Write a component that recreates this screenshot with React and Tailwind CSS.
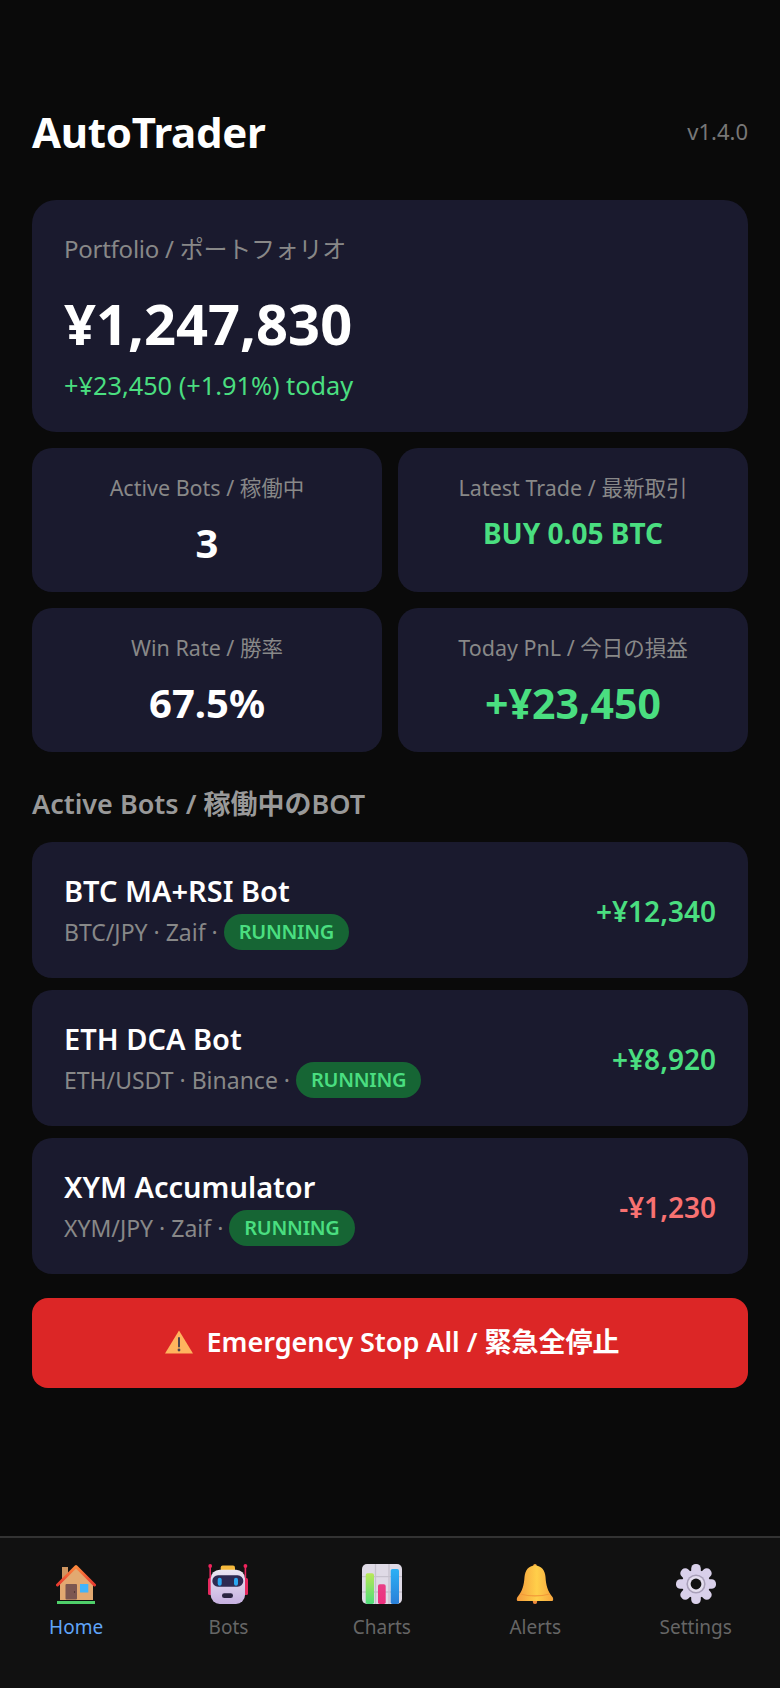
import React from 'react'

const font = { fontFamily: '"Noto Sans", "Noto Sans CJK JP", sans-serif' }

function HomeIcon() {
  return (
    <svg viewBox="0 0 40 40" className="w-10 h-10">
      <defs>
        <linearGradient id="roof" x1="0" y1="0" x2="0" y2="1">
          <stop offset="0" stopColor="#ff8a3d" />
          <stop offset="1" stopColor="#e8392f" />
        </linearGradient>
      </defs>
      <rect x="6" y="3" width="6" height="12" fill="#cf9560" />
      <path d="M20 3 L4 19 V36 H37 V19 Z" fill="#e2a971" />
      <rect x="9.5" y="20" width="11.5" height="15.5" rx="1" fill="#7c5751" />
      <circle cx="18.5" cy="28" r="0.7" fill="#3f2a2a" />
      <rect x="24" y="20" width="8.3" height="8.5" fill="#3fb4fb" />
      <path d="M1.5 21 L20 2.5 L38.5 21" fill="none" stroke="url(#roof)" strokeWidth="3" strokeLinejoin="round" strokeLinecap="round" />
      <rect x="1" y="37" width="38" height="3" fill="#4fd06a" />
    </svg>
  )
}

function BotIcon() {
  return (
    <svg viewBox="0 0 40 40" className="w-10 h-10">
      <defs>
        <linearGradient id="head" x1="0" y1="0" x2="0" y2="1">
          <stop offset="0" stopColor="#ece7f2" />
          <stop offset="1" stopColor="#c6b0e0" />
        </linearGradient>
      </defs>
      <rect x="1.4" y="2" width="1.6" height="15" fill="#e6295f" />
      <rect x="36.6" y="2" width="1.6" height="15" fill="#e6295f" />
      <circle cx="2.2" cy="2" r="1.9" fill="#f0245c" />
      <circle cx="37.4" cy="2" r="1.9" fill="#f0245c" />
      <rect x="0" y="14" width="4" height="17" rx="1.5" fill="#e6295f" />
      <rect x="36" y="14" width="4" height="17" rx="1.5" fill="#e6295f" />
      <rect x="12.7" y="1.5" width="14.3" height="6" rx="2" fill="#f6b93b" />
      <rect x="2.7" y="5.7" width="34.3" height="34.3" rx="9" fill="url(#head)" />
      <rect x="4.3" y="11.3" width="31" height="11.4" rx="5.7" fill="#2e2a52" />
      <rect x="9.7" y="13.7" width="4" height="8" rx="2" fill="#2aa7f0" />
      <rect x="26" y="13.7" width="4" height="8" rx="2" fill="#2aa7f0" />
      <rect x="14" y="29.3" width="11" height="4.7" rx="2.3" fill="#2a2440" />
    </svg>
  )
}

function ChartIcon() {
  return (
    <svg viewBox="0 0 40 40" className="w-10 h-10">
      <defs>
        <linearGradient id="barG" x1="0" y1="0" x2="0" y2="1">
          <stop offset="0" stopColor="#b9e858" />
          <stop offset="1" stopColor="#4fdd7a" />
        </linearGradient>
        <linearGradient id="barP" x1="0" y1="0" x2="0" y2="1">
          <stop offset="0" stopColor="#e83f86" />
          <stop offset="1" stopColor="#ee2f7e" />
        </linearGradient>
        <linearGradient id="barB" x1="0" y1="0" x2="0" y2="1">
          <stop offset="0" stopColor="#2bb0f5" />
          <stop offset="1" stopColor="#2a7fd8" />
        </linearGradient>
      </defs>
      <rect width="40" height="40" rx="5" fill="#dfdae6" />
      <path d="M13.5 0V40M27 0V40M0 12.7H40M0 28H40" stroke="#c6c1cd" strokeWidth="1.3" />
      <rect x="3.7" y="9.3" width="8.3" height="30.7" rx="1.8" fill="url(#barG)" />
      <rect x="16" y="20.3" width="7.7" height="19.7" rx="1.8" fill="url(#barP)" />
      <rect x="28.7" y="5" width="8.3" height="35" rx="1.8" fill="url(#barB)" />
    </svg>
  )
}

function BellIcon() {
  return (
    <svg viewBox="0 0 40 40" className="w-10 h-10">
      <defs>
        <linearGradient id="bell" x1="0" y1="0" x2="1" y2="0">
          <stop offset="0" stopColor="#f59b3c" />
          <stop offset="0.55" stopColor="#ffcf4a" />
          <stop offset="1" stopColor="#f6a53e" />
        </linearGradient>
      </defs>
      <circle cx="20" cy="37.8" r="2.2" fill="#f08a3c" />
      <circle cx="20" cy="1.8" r="1.8" fill="#f5a83e" />
      <path d="M20 1.5 C26.5 1.5 30 6.5 30.5 13 C31 21 32.5 27 37.5 33 C38.5 34.5 38.5 37 37 37 H3 C1.5 37 1.5 34.5 2.5 33 C7.5 27 9 21 9.5 13 C10 6.5 13.5 1.5 20 1.5Z" fill="url(#bell)" />
      <path d="M5.5 30 C14 32.5 26 32.5 34.5 30" fill="none" stroke="#f29a3a" strokeWidth="1.2" />
    </svg>
  )
}

function GearIcon() {
  const teeth = [0, 45, 90, 135, 180, 225, 270, 315]
  return (
    <svg viewBox="0 0 40 40" className="w-10 h-10">
      {teeth.map(a => (
        <rect key={a} x="15.2" y="0" width="9.6" height="12" rx="4.4" fill="#d9d0ea" transform={`rotate(${a} 20 20)`} />
      ))}
      <circle cx="20" cy="20" r="14" fill="#d9d0ea" />
      <circle cx="20" cy="20" r="9.6" fill="#a89fb8" />
      <circle cx="20" cy="20" r="8" fill="#e4deee" />
      <circle cx="20" cy="20" r="5.4" fill="#111111" />
    </svg>
  )
}

function WarnIcon() {
  return (
    <svg viewBox="0 0 28 24" className="w-7 h-6 shrink-0">
      <path d="M14 0.5 L28 23.5 H0 Z" fill="#ffb45e" />
      <rect x="13" y="7" width="2" height="10.5" rx="1" fill="#4b4650" />
      <circle cx="14" cy="20" r="1.4" fill="#4b4650" />
    </svg>
  )
}

function Stat({ label, value, valueClass }) {
  return (
    <div className="bg-[#1a1a2e] rounded-[20px] h-[144px] flex flex-col items-center pt-[25px]">
      <div className="text-[21.5px] leading-[30px] text-[#888888]">{label}</div>
      <div className={valueClass}>{value}</div>
    </div>
  )
}

function BotRow({ name, pair, pnl, pnlClass }) {
  return (
    <div className="bg-[#1a1a2e] rounded-[20px] h-[136px] flex items-center justify-between px-[32px] pt-[2px]">
      <div>
        <div className="text-[29px] leading-[38px] font-semibold text-white mb-[4px]">{name}</div>
        <div className="text-[23px] leading-[36px] text-[#888888] flex items-center gap-[6px]">
          <span>{pair} ·</span>
          <span className="bg-[#166534] text-[#4ade80] text-[20px] leading-[36px] font-semibold tracking-[-0.3px] rounded-[18px] px-[15px]">RUNNING</span>
        </div>
      </div>
      <div className={`text-[28px] font-semibold ${pnlClass}`}>{pnl}</div>
    </div>
  )
}

function NavItem({ icon, label, active }) {
  return (
    <div className="flex flex-col items-center min-w-[72px] px-2">
      {icon}
      <div className={`text-[19px] leading-[28px] mt-[9px] ${active ? 'text-[#60a5fa]' : 'text-[#666666]'}`}>{label}</div>
    </div>
  )
}

export default function App() {
  return (
    <div style={font} className="bg-[#0a0a0a] min-h-[1688px] flex flex-col">
      <div className="flex-1 px-[32px] pt-[100px]">
        <div className="flex items-center justify-between h-[62px] mb-[38px]">
          <h1 className="text-[42px] font-bold tracking-[-0.3px] text-white">AutoTrader</h1>
          <span className="text-[22px] text-[#777777]">v1.4.0</span>
        </div>

        <div className="bg-[#1a1a2e] rounded-[24px] h-[232px] px-[32px] pt-[32px] mb-[16px]">
          <div className="text-[24px] leading-[34px] tracking-[-0.25px] text-[#888888]">Portfolio / ポートフォリオ</div>
          <div className="text-[56px] leading-[76px] font-bold text-white mt-[19px]">¥1,247,830</div>
          <div className="text-[25.3px] leading-[34px] text-[#4ade80] mt-[7px]">+¥23,450 (+1.91%) today</div>
        </div>

        <div className="grid grid-cols-2 gap-[16px] mb-[34px]">
          <Stat label="Active Bots / 稼働中" value="3" valueClass="text-[40px] leading-[54px] font-bold text-white mt-[13px]" />
          <Stat label="Latest Trade / 最新取引" value="BUY 0.05 BTC" valueClass="text-[28px] leading-[38px] font-bold text-[#4ade80] mt-[11px]" />
          <Stat label="Win Rate / 勝率" value="67.5%" valueClass="text-[40px] leading-[54px] font-bold text-white mt-[13px]" />
          <Stat label="Today PnL / 今日の損益" value="+¥23,450" valueClass="text-[41px] leading-[54px] font-bold text-[#4ade80] mt-[13px]" />
        </div>

        <h2 className="text-[27px] leading-[36px] font-semibold text-[#999999] mb-[20px]">Active Bots / 稼働中のBOT</h2>

        <div className="flex flex-col gap-[12px]">
          <BotRow name="BTC MA+RSI Bot" pair="BTC/JPY · Zaif" pnl="+¥12,340" pnlClass="text-[#4ade80]" />
          <BotRow name="ETH DCA Bot" pair="ETH/USDT · Binance" pnl="+¥8,920" pnlClass="text-[#4ade80]" />
          <BotRow name="XYM Accumulator" pair="XYM/JPY · Zaif" pnl="-¥1,230" pnlClass="text-[#f87171]" />
        </div>

        <button className="w-full h-[90px] mt-[24px] pl-[5px] pb-[2px] bg-[#dc2626] rounded-[16px] text-white text-[27px] font-semibold flex items-center justify-center gap-[13px]">
          <WarnIcon />
          Emergency Stop All / 緊急全停止
        </button>
      </div>

      <nav className="h-[152px] bg-[#111111] border-t-2 border-[#333333] flex justify-around items-start pt-[26px]">
        <NavItem icon={<HomeIcon />} label="Home" active />
        <NavItem icon={<BotIcon />} label="Bots" />
        <NavItem icon={<ChartIcon />} label="Charts" />
        <NavItem icon={<BellIcon />} label="Alerts" />
        <NavItem icon={<GearIcon />} label="Settings" />
      </nav>
    </div>
  )
}
